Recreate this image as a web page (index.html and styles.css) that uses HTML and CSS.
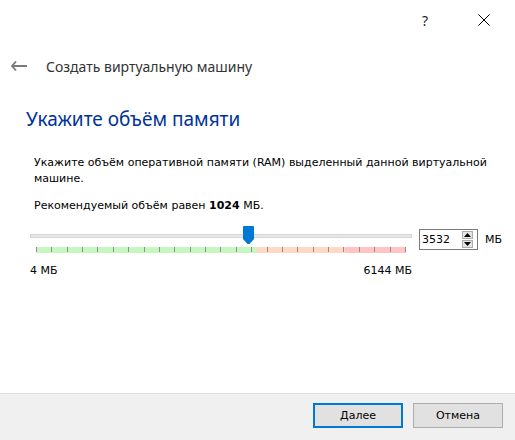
FILE: index.html
```html
<!DOCTYPE html>
<html lang="ru">
<head>
  <meta charset="UTF-8">
  <title>Создать виртуальную машину</title>
  <link rel="stylesheet" href="styles.css">
</head>
<body>
  <div class="wizard">
    <div class="titlebar">
      <span class="help-button">?</span>
      <span class="close-button">
        <svg width="12" height="12" viewBox="0 0 12 12"><path d="M0.5 0.5 L11.5 11.5 M11.5 0.5 L0.5 11.5" stroke="#000" stroke-width="1" fill="none"/></svg>
      </span>
    </div>

    <div class="nav">
      <svg class="back-arrow" width="16" height="10" viewBox="0 0 16 10"><path d="M5 0.5 L1 5 L5 9.5 M1 5 H16" stroke="#7a7a7a" stroke-width="1.8" fill="none"/></svg>
      <span class="nav-title">Создать виртуальную машину</span>
    </div>

    <div class="page">
      <h1 class="page-title">Укажите объём памяти</h1>
      <p class="page-text">Укажите объём оперативной памяти (RAM) выделенный данной виртуальной машине.</p>
      <p class="page-text">Рекомендуемый объём равен <b>1024</b> МБ.</p>

      <div class="memory-row">
        <div class="slider">
          <div class="groove"></div>
          <div class="scale"></div>
          <svg class="handle" width="11" height="18" viewBox="0 0 11 18"><path d="M0 1 Q0 0 1 0 H10 Q11 0 11 1 V13 L6.5 18 H4.5 L0 13 Z" fill="#0078d7"/></svg>
          <div class="limits">
            <span>4 МБ</span>
            <span>6144 МБ</span>
          </div>
        </div>
        <div class="spinbox">
          <span class="spin-value">3532</span>
          <div class="spin-arrows">
            <span class="spin-up"><svg width="7" height="4" viewBox="0 0 7 4"><path d="M3.5 0 L7 4 H0 Z" fill="#000"/></svg></span>
            <span class="spin-down"><svg width="7" height="4" viewBox="0 0 7 4"><path d="M0 0 H7 L3.5 4 Z" fill="#000"/></svg></span>
          </div>
        </div>
        <span class="unit">МБ</span>
      </div>
    </div>

    <div class="footer">
      <button class="btn btn-default"><u>Д</u>алее</button>
      <button class="btn">Отмена</button>
    </div>
  </div>
</body>
</html>
```

FILE: styles.css
```css
* {
  box-sizing: border-box;
  margin: 0;
  padding: 0;
}

body {
  font-family: 'DejaVu Sans', Tahoma, sans-serif;
  font-size: 11px;
  color: #000;
  background-color: #fff;
}

.wizard {
  display: flex;
  flex-direction: column;
  height: 440px;
}

.titlebar {
  display: flex;
  justify-content: flex-end;
  align-items: center;
  height: 40px;
  padding-right: 25px;
  gap: 50px;
}

.help-button {
  font-family: 'Noto Sans', sans-serif;
  font-size: 14px;
  color: #222;
}

.close-button {
  display: flex;
}

.nav {
  display: flex;
  align-items: center;
  height: 52px;
  padding-left: 11px;
}

.back-arrow {
  margin-right: 19px;
}

.nav-title {
  font-family: 'Noto Sans', sans-serif;
  font-size: 14px;
  color: #333;
}

.page {
  padding: 0 0 0 26px;
}

.page-title {
  font-family: 'Noto Sans', sans-serif;
  font-weight: normal;
  font-size: 19px;
  color: #003399;
  margin: 14px 0 23px 0;
}

.page-text {
  padding-left: 8px;
  line-height: 16px;
  margin-bottom: 11px;
  width: 480px;
}

.memory-row {
  display: flex;
  align-items: flex-start;
  margin-top: 8px;
}

.slider {
  position: relative;
  width: 382px;
  margin-left: 4px;
  padding-top: 9px;
}

.groove {
  height: 4px;
  background-color: #e7e7e7;
  border: 1px solid #d6d6d6;
}

.scale {
  margin: 9px 0 0 6px;
  width: 370px;
  height: 6px;
  background:
    repeating-linear-gradient(to right, #8f8f8f 0 1px, transparent 1px 15.375px) 0 0 / 370px 5px no-repeat,
    linear-gradient(to right, #c6f7c0 0 221px, #ffd9c6 221px 309px, #ffc4c4 309px);
}

.handle {
  position: absolute;
  top: 1px;
  left: 213px;
}

.limits {
  display: flex;
  justify-content: space-between;
  margin-top: 11px;
}

.spinbox {
  display: flex;
  align-items: center;
  justify-content: space-between;
  width: 59px;
  height: 21px;
  margin-left: 7px;
  margin-top: 4px;
  padding: 0 4px 0 2px;
  border: 1px solid #7a7a7a;
}

.spin-arrows {
  display: flex;
  flex-direction: column;
  gap: 1px;
}

.spin-up, .spin-down {
  display: flex;
  justify-content: center;
  align-items: center;
  width: 11px;
  height: 8px;
  background-color: #e5e5e5;
  border: 1px solid #adadad;
}

.unit {
  margin: 8px 0 0 7px;
}

.footer {
  display: flex;
  justify-content: flex-end;
  gap: 10px;
  margin-top: auto;
  height: 47px;
  padding: 9px 12px 0 0;
  background-color: #f0f0f0;
  border-top: 1px solid #dfdfdf;
}

.btn {
  width: 90px;
  height: 25px;
  font-family: 'DejaVu Sans', Tahoma, sans-serif;
  font-size: 11px;
  color: #000;
  background-color: #e1e1e1;
  border: 1px solid #adadad;
}

.btn-default {
  border: 2px solid #0078d7;
}
```
